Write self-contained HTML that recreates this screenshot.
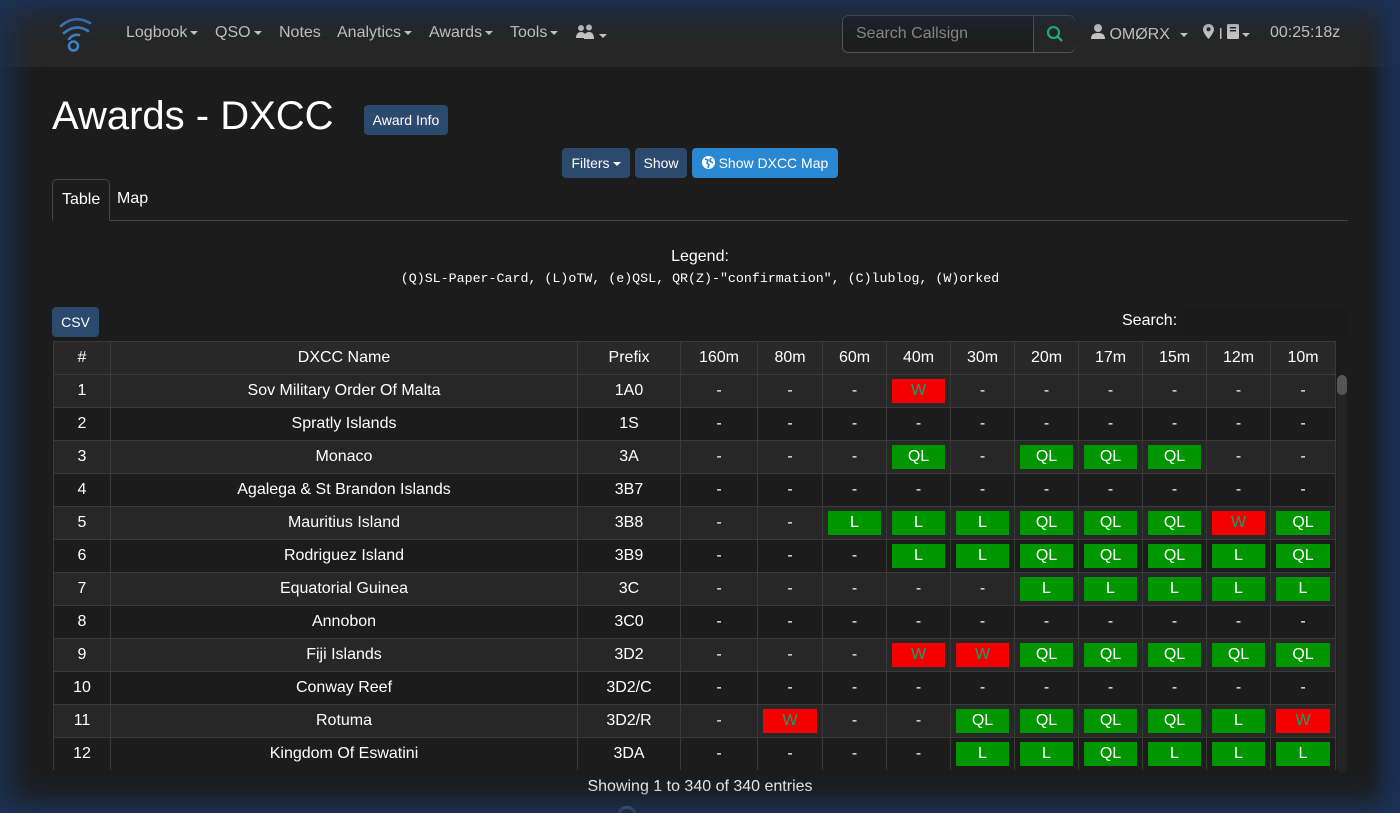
<!DOCTYPE html>
<html><head><meta charset="utf-8">
<style>
*{box-sizing:border-box;margin:0;padding:0}
html,body{width:1400px;height:813px;overflow:hidden}
body{background:#1c1c1c;font-family:"Liberation Sans",sans-serif;color:#fff;position:relative}
.edge{position:absolute;inset:0;pointer-events:none;box-shadow:inset 0 0 28px 12px #1c3152,inset -14px 0 18px 0 #19305a;z-index:9}
.nav{position:absolute;left:0;top:0;width:1400px;height:67px;background:#262626;}
.nav .it{position:absolute;top:24px;font-size:16px;color:#c8c8c8}
.car{display:inline-block;width:0;height:0;border-left:4px solid transparent;border-right:4px solid transparent;border-top:4px solid #c8c8c8;vertical-align:middle;margin-left:3px}
.search{position:absolute;left:842px;top:15px;width:233px;height:38px;border:1px solid #555;border-radius:6px;background:#1e1e1e}
.search .ph{position:absolute;left:13px;top:9px;font-size:16px;color:#8a8a8a}
.search .btn{position:absolute;left:190px;top:0;width:42px;height:36px;border-left:1px solid #555;background:#262626;border-radius:0 6px 6px 0}
h1{position:absolute;left:52px;top:94px;font-size:40px;font-weight:normal;color:#fff}
.b{position:absolute;background:#2c4a6e;color:#fff;font-size:14px;border-radius:4px;text-align:center;line-height:30px;height:30px}
.tabs{position:absolute;left:52px;top:220px;width:1296px;border-top:1px solid #444}
.tab{position:absolute;top:179px;font-size:16px;height:42px;line-height:40px;padding:0 9px}
.legend{position:absolute;left:0;width:1400px;text-align:center}
table{position:absolute;left:53px;top:341px;border-collapse:collapse;font-size:16px;table-layout:fixed;width:1282px}
td,th{border:1px solid #3a3a3a;height:33px;text-align:center;font-weight:normal;padding:0}
th{background:#292929}
tr:nth-child(odd) td{background:#1c1c1c}
tr:nth-child(even) td{background:#272727}
.g,.r{display:block;margin:0 5px;height:24px;line-height:24px}
.g{background:#009600;color:#fff}
.r{background:#f40000;color:#0fa36b}
.clip{position:absolute;left:0;top:770px;width:1400px;height:60px;background:#1c1c1c}
</style></head><body>
<div class="nav">
<svg style="position:absolute;left:56px;top:14px" width="40" height="40" viewBox="0 0 40 40" fill="none" stroke="#3f82c8" stroke-width="2.6" stroke-linecap="round"><path d="M5 12 Q18 0 34 9"/><path d="M8 19 Q20 9 32 17"/><path d="M13 25 Q17 20 23 21"/><circle cx="17.5" cy="32" r="4.5"/></svg>
<span class="it" style="left:126px">Logbook<span class="car"></span></span>
<span class="it" style="left:215px">QSO<span class="car"></span></span>
<span class="it" style="left:279px">Notes</span>
<span class="it" style="left:337px">Analytics<span class="car"></span></span>
<span class="it" style="left:429px">Awards<span class="car"></span></span>
<span class="it" style="left:510px">Tools<span class="car"></span></span>
<span class="it" style="left:576px"><svg width="20" height="16" viewBox="0 0 20 16" fill="#c8c8c8"><circle cx="5" cy="4" r="3"/><circle cx="13" cy="3.5" r="3"/><path d="M0 14c0-4 2-6 5-6s5 2 5 6z"/><path d="M8 15c0-5 2-7 5-7s5 2 5 7z"/></svg><span class="car"></span></span>
<div class="search"><span class="ph">Search Callsign</span><div class="btn"><svg style="position:absolute;left:12px;top:9px" width="18" height="18" viewBox="0 0 18 18" fill="none" stroke="#1db47a" stroke-width="2.2"><circle cx="7.5" cy="7.5" r="5.5"/><path d="M11.5 11.5L16 16"/></svg></div></div>
<span class="it" style="left:1091px"><svg width="14" height="15" viewBox="0 0 14 15" fill="#c8c8c8"><circle cx="7" cy="4" r="4"/><path d="M0 15c0-5 3-6 7-6s7 1 7 6z"/></svg> OMØRX <span class="car" style="margin-left:6px"></span></span>
<span class="it" style="left:1203px"><svg width="11" height="15" viewBox="0 0 11 15" fill="#c8c8c8"><path d="M5.5 0C2.5 0 0 2.3 0 5.3 0 9 5.5 15 5.5 15S11 9 11 5.3C11 2.3 8.5 0 5.5 0zm0 7.3a2 2 0 110-4 2 2 0 010 4z"/></svg> I <svg width="12" height="15" viewBox="0 0 12 15" fill="#c8c8c8"><rect x="0" y="0" width="12" height="15" rx="1.5"/><rect x="3" y="3" width="6" height="1.5" fill="#262626"/><rect x="3" y="6" width="6" height="1.5" fill="#262626"/></svg><span class="car"></span></span>
<span class="it" style="left:1270px">00:25:18z</span>
</div>
<h1>Awards - DXCC</h1>
<div class="b" style="left:364px;top:105px;width:84px">Award Info</div>
<div class="b" style="left:562px;top:148px;width:68px">Filters<span class="car" style="border-top-color:#fff"></span></div>
<div class="b" style="left:635px;top:148px;width:52px">Show</div>
<div class="b" style="left:692px;top:148px;width:146px;background:#2a88d2"><svg width="13" height="13" viewBox="0 0 13 13" style="vertical-align:-1px"><circle cx="6.5" cy="6.5" r="6.5" fill="#fff"/><path d="M3 3l3 1-1 3 2 2-1 3M9 2l-1 3 3 2" stroke="#2a88d2" stroke-width="1.6" fill="none"/></svg> Show DXCC Map</div>
<div class="tabs"></div>
<div class="tab" style="left:52px;border:1px solid #444;border-bottom:1px solid #1c1c1c;border-radius:5px 5px 0 0;background:#1c1c1c;z-index:2">Table</div>
<div class="tab" style="left:108px">Map</div>
<div class="legend" style="top:248px;font-size:16px">Legend:</div>
<div class="legend" style="top:271px;font-family:'Liberation Mono',monospace;font-size:13.3px">(Q)SL-Paper-Card, (L)oTW, (e)QSL, QR(Z)-"confirmation", (C)lublog, (W)orked</div>
<div class="b" style="left:52px;top:307px;width:47px">CSV</div>
<div style="position:absolute;left:1122px;top:312px;font-size:16px">Search:</div>
<div style="position:absolute;left:1185px;top:307px;width:162px;height:29px;background:#1a1a1a;border-radius:4px"></div>
<table>
<colgroup><col style="width:57px"><col style="width:467px"><col style="width:103px"><col style="width:77px"><col style="width:65px"><col style="width:64px"><col style="width:64px"><col style="width:64px"><col style="width:64px"><col style="width:64px"><col style="width:64px"><col style="width:64px"><col style="width:65px"></colgroup>
<tr><th>#</th><th>DXCC Name</th><th>Prefix</th><th>160m</th><th>80m</th><th>60m</th><th>40m</th><th>30m</th><th>20m</th><th>17m</th><th>15m</th><th>12m</th><th>10m</th></tr>
<tr><td>1</td><td>Sov Military Order Of Malta</td><td>1A0</td><td>-</td><td>-</td><td>-</td><td><span class="r">W</span></td><td>-</td><td>-</td><td>-</td><td>-</td><td>-</td><td>-</td></tr>
<tr><td>2</td><td>Spratly Islands</td><td>1S</td><td>-</td><td>-</td><td>-</td><td>-</td><td>-</td><td>-</td><td>-</td><td>-</td><td>-</td><td>-</td></tr>
<tr><td>3</td><td>Monaco</td><td>3A</td><td>-</td><td>-</td><td>-</td><td><span class="g">QL</span></td><td>-</td><td><span class="g">QL</span></td><td><span class="g">QL</span></td><td><span class="g">QL</span></td><td>-</td><td>-</td></tr>
<tr><td>4</td><td>Agalega &amp; St Brandon Islands</td><td>3B7</td><td>-</td><td>-</td><td>-</td><td>-</td><td>-</td><td>-</td><td>-</td><td>-</td><td>-</td><td>-</td></tr>
<tr><td>5</td><td>Mauritius Island</td><td>3B8</td><td>-</td><td>-</td><td><span class="g">L</span></td><td><span class="g">L</span></td><td><span class="g">L</span></td><td><span class="g">QL</span></td><td><span class="g">QL</span></td><td><span class="g">QL</span></td><td><span class="r">W</span></td><td><span class="g">QL</span></td></tr>
<tr><td>6</td><td>Rodriguez Island</td><td>3B9</td><td>-</td><td>-</td><td>-</td><td><span class="g">L</span></td><td><span class="g">L</span></td><td><span class="g">QL</span></td><td><span class="g">QL</span></td><td><span class="g">QL</span></td><td><span class="g">L</span></td><td><span class="g">QL</span></td></tr>
<tr><td>7</td><td>Equatorial Guinea</td><td>3C</td><td>-</td><td>-</td><td>-</td><td>-</td><td>-</td><td><span class="g">L</span></td><td><span class="g">L</span></td><td><span class="g">L</span></td><td><span class="g">L</span></td><td><span class="g">L</span></td></tr>
<tr><td>8</td><td>Annobon</td><td>3C0</td><td>-</td><td>-</td><td>-</td><td>-</td><td>-</td><td>-</td><td>-</td><td>-</td><td>-</td><td>-</td></tr>
<tr><td>9</td><td>Fiji Islands</td><td>3D2</td><td>-</td><td>-</td><td>-</td><td><span class="r">W</span></td><td><span class="r">W</span></td><td><span class="g">QL</span></td><td><span class="g">QL</span></td><td><span class="g">QL</span></td><td><span class="g">QL</span></td><td><span class="g">QL</span></td></tr>
<tr><td>10</td><td>Conway Reef</td><td>3D2/C</td><td>-</td><td>-</td><td>-</td><td>-</td><td>-</td><td>-</td><td>-</td><td>-</td><td>-</td><td>-</td></tr>
<tr><td>11</td><td>Rotuma</td><td>3D2/R</td><td>-</td><td><span class="r">W</span></td><td>-</td><td>-</td><td><span class="g">QL</span></td><td><span class="g">QL</span></td><td><span class="g">QL</span></td><td><span class="g">QL</span></td><td><span class="g">L</span></td><td><span class="r">W</span></td></tr>
<tr><td>12</td><td>Kingdom Of Eswatini</td><td>3DA</td><td>-</td><td>-</td><td>-</td><td>-</td><td><span class="g">L</span></td><td><span class="g">L</span></td><td><span class="g">QL</span></td><td><span class="g">L</span></td><td><span class="g">L</span></td><td><span class="g">L</span></td></tr>
<tr><td>13</td><td>Malawi</td><td>7Q</td><td>-</td><td>-</td><td>-</td><td>-</td><td>-</td><td>-</td><td>-</td><td>-</td><td>-</td><td>-</td></tr>
</table>
<div class="clip"></div>
<div style="position:absolute;left:1337px;top:375px;width:10px;height:398px;background:#242424;border-radius:5px"><div style="width:10px;height:20px;background:#555;border-radius:5px"></div></div>
<div class="legend" style="top:778px;font-size:16px;left:0">Showing 1 to 340 of 340 entries</div>
<div style="position:absolute;left:617px;top:806px;width:20px;height:20px;border:3px solid #8fa4c4;border-radius:50%"></div>
<div class="edge"></div>
</body></html>
